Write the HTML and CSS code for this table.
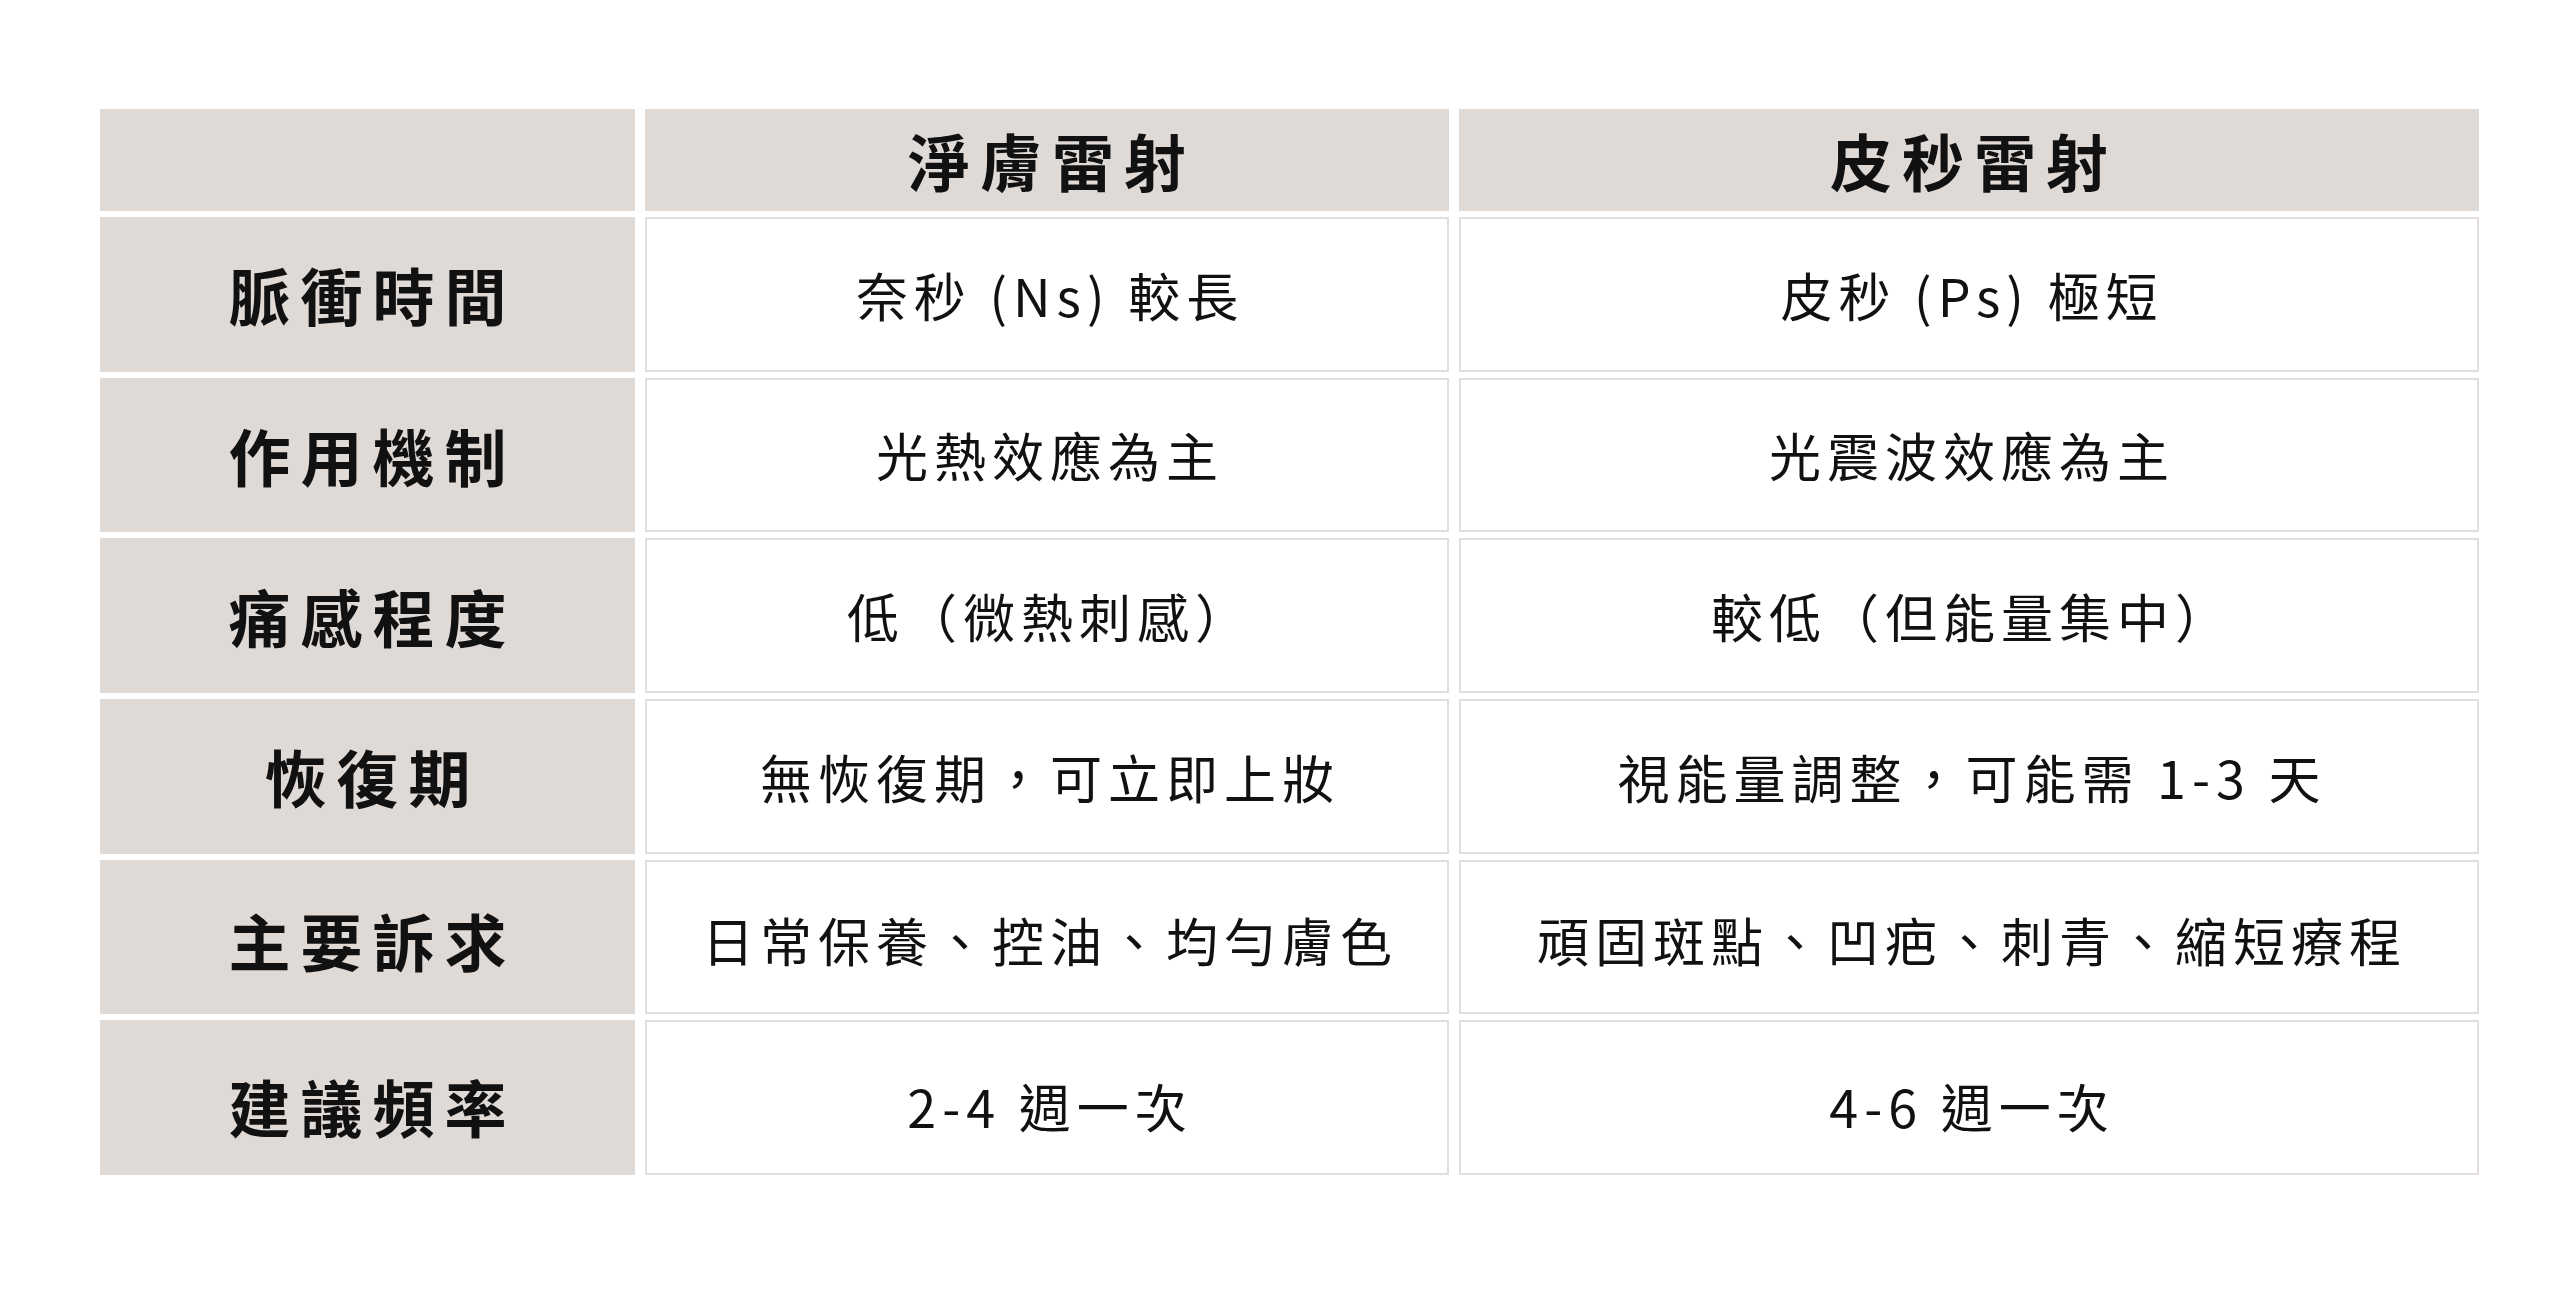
FILE: index.html
```html
<!DOCTYPE html>
<html lang="zh-Hant">
<head>
<meta charset="utf-8">
<title>淨膚雷射 vs 皮秒雷射</title>
<link rel="stylesheet" href="styles.css">
</head>
<body>
<div class="table">
  <div class="cell head"></div>
  <div class="cell head title">淨膚雷射</div>
  <div class="cell head title">皮秒雷射</div>

  <div class="cell label">脈衝時間</div>
  <div class="cell value">奈秒 (Ns) 較長</div>
  <div class="cell value">皮秒 (Ps) 極短</div>

  <div class="cell label">作用機制</div>
  <div class="cell value">光熱效應為主</div>
  <div class="cell value">光震波效應為主</div>

  <div class="cell label">痛感程度</div>
  <div class="cell value">低（微熱刺感）</div>
  <div class="cell value">較低（但能量集中）</div>

  <div class="cell label">恢復期</div>
  <div class="cell value">無恢復期，可立即上妝</div>
  <div class="cell value">視能量調整，可能需 1-3 天</div>

  <div class="cell label row5">主要訴求</div>
  <div class="cell value row5">日常保養、控油、均勻膚色</div>
  <div class="cell value row5">頑固斑點、凹疤、刺青、縮短療程</div>

  <div class="cell label row6">建議頻率</div>
  <div class="cell value row6">2-4 週一次</div>
  <div class="cell value row6">4-6 週一次</div>
</div>
</body>
</html>
```

FILE: styles.css
```css
html, body {
  margin: 0;
  padding: 0;
  background: #ffffff;
}

body {
  padding: 109px 0 0 100px;
  font-family: "Noto Sans CJK TC", "Noto Sans", sans-serif;
  color: #111111;
}

.table {
  display: grid;
  grid-template-columns: 535px 804px 1020px;
  grid-template-rows: 102px repeat(6, 1fr);
  column-gap: 10px;
  row-gap: 6px;
  width: 2379px;
  height: 1066px;
}

.cell {
  box-sizing: border-box;
  display: flex;
  align-items: center;
  justify-content: center;
  text-align: center;
  border: 2px solid #e3dedb;
}

.head,
.label {
  background: #e0dad7;
  border-color: #e0dad7;
}

.title,
.label {
  font-size: 62px;
  font-weight: 700;
  letter-spacing: 10px;
  padding-left: 10px;
}

.value {
  background: #ffffff;
  font-size: 52px;
  font-weight: 400;
  letter-spacing: 6px;
  padding-left: 6px;
}

.row5 {
  padding-top: 6px;
}

.row6 {
  padding-top: 16px;
}
```
